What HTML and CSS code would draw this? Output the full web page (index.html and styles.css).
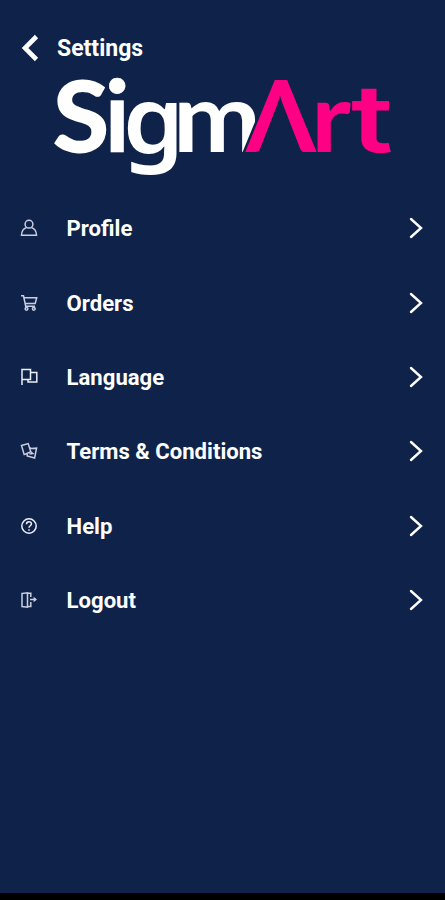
FILE: index.html
```html
<!DOCTYPE html>
<html lang="en">
<head>
    <meta charset="UTF-8">
    <meta name="viewport" content="width=device-width, initial-scale=1.0">
    <title>Settings</title>
    <link rel="stylesheet" href="styles.css">
</head>
<body>
    <div class="screen">
        <header class="header">
            <svg class="back" viewBox="0 0 18 28"><path d="M15.5 2.5 L4 14 L15.5 25.5"/></svg>
            <h1>Settings</h1>
        </header>

        <svg class="logo" viewBox="0 0 445 114">
            <g class="logo-white">
                <text class="logo-s" x="53" y="83.5" textLength="56" lengthAdjust="spacingAndGlyphs">S</text>
                <text class="logo-i" x="104.5" y="84">i</text>
                <text class="logo-g" x="123" y="84.5" textLength="61" lengthAdjust="spacingAndGlyphs">g</text>
                <text class="logo-m" x="173" y="84" textLength="88" lengthAdjust="spacingAndGlyphs">m</text>
            </g>
            <g class="logo-pink">
                <text class="logo-a" x="246" y="84" textLength="70" lengthAdjust="spacingAndGlyphs">Λ</text>
                <text class="logo-r" x="311" y="84" textLength="40" lengthAdjust="spacingAndGlyphs">r</text>
                <text class="logo-t" x="351" y="84" textLength="42" lengthAdjust="spacingAndGlyphs">t</text>
            </g>
        </svg>

        <nav class="menu">
            <a class="item">
                <svg class="icon" viewBox="0 0 18 18"><circle cx="9" cy="5.2" r="3.9"/><path d="M6.5 8.6 C3.5 9.5 1.7 12 1.5 16.2 H16.5 C16.3 12 14.5 9.5 11.5 8.6"/></svg>
                <span>Profile</span>
                <svg class="arrow" viewBox="0 0 14 22"><path d="M2 2 L12 11 L2 20"/></svg>
            </a>
            <a class="item">
                <svg class="icon" viewBox="0 0 18 18"><path d="M1 1.8 H3.5 L5.7 12.2 H15 M4 3.8 H16.7 L15.2 9.5 H5.2"/><circle cx="6.5" cy="14.8" r="1.4"/><circle cx="13.8" cy="14.8" r="1.4"/></svg>
                <span>Orders</span>
                <svg class="arrow" viewBox="0 0 14 22"><path d="M2 2 L12 11 L2 20"/></svg>
            </a>
            <a class="item">
                <svg class="icon bright" viewBox="0 0 18 18"><path d="M2 17 V1.5 H10.5 V11.5 H2 M10.5 4.5 H16.8 V14 H8 V11.5"/></svg>
                <span>Language</span>
                <svg class="arrow" viewBox="0 0 14 22"><path d="M2 2 L12 11 L2 20"/></svg>
            </a>
            <a class="item">
                <svg class="icon" viewBox="0 0 18 18"><path d="M1.5 3.5 L8.2 1.6 L10.8 9.8 L4.2 12.6 Z M9.8 5.6 L11.5 6.6 L16.6 6.2 L14.6 16 L7.2 14 L7.2 12 M11 10 L12.8 11.5 L9.5 12"/></svg>
                <span>Terms &amp; Conditions</span>
                <svg class="arrow" viewBox="0 0 14 22"><path d="M2 2 L12 11 L2 20"/></svg>
            </a>
            <a class="item">
                <svg class="icon bright" viewBox="0 0 18 18"><circle cx="9" cy="9" r="7.2"/><path d="M6.5 7.2 C6.5 3.8 11.6 4 11.4 7 C11.3 8.8 9 8.7 9 10.8 M9 12.2 V13.8"/></svg>
                <span>Help</span>
                <svg class="arrow" viewBox="0 0 14 22"><path d="M2 2 L12 11 L2 20"/></svg>
            </a>
            <a class="item">
                <svg class="icon" viewBox="0 0 18 18"><path d="M2 2.5 L7.5 1.8 V16.2 L2 15.5 Z M7 2.2 H10.8 V6 M10.8 11 V15.5 H7 M10 8.5 H16"/><path class="solid" d="M13.6 5.8 L17 8.5 L13.6 11.2 Z"/></svg>
                <span>Logout</span>
                <svg class="arrow" viewBox="0 0 14 22"><path d="M2 2 L12 11 L2 20"/></svg>
            </a>
        </nav>
    </div>
</body>
</html>
```
FILE: styles.css
```css
* {
    box-sizing: border-box;
}
body {
    margin: 0;
    background-color: #000;
    font-family: Roboto, sans-serif;
    color: #fff;
}
.screen {
    height: 893px;
    padding-top: 28px;
    background-color: #0f234a;
}
.header {
    display: flex;
    align-items: center;
    gap: 18px;
    height: 40px;
    padding-left: 21px;
}
.header h1 {
    margin: 0;
    font-size: 23px;
    font-weight: 700;
}
.back {
    width: 18px;
    height: 28px;
    fill: none;
    stroke: #fff;
    stroke-width: 4.6;
}
.logo {
    display: block;
    width: 445px;
    height: 114px;
    overflow: visible;
    font-family: Lato, sans-serif;
    font-size: 96px;
    font-weight: 700;
}
.logo-white {
    fill: #fff;
}
.logo-pink {
    fill: #ff0084;
}
.logo-s {
    font-size: 98px;
    stroke: #fff;
    stroke-width: 1.8px;
}
.logo-i {
    font-size: 100px;
    stroke: #fff;
    stroke-width: 0.6px;
}
.logo-g {
    font-family: "Noto Sans", sans-serif;
    font-size: 92px;
    font-weight: 600;
}
.logo-a {
    font-size: 100px;
    stroke: #0f234a;
    stroke-width: 5px;
    paint-order: stroke;
}
.logo-t {
    font-family: Inter, sans-serif;
    font-size: 94px;
    font-weight: 600;
}
.menu {
    display: flex;
    flex-direction: column;
    padding: 9px 22px 0 20px;
}
.item {
    display: flex;
    align-items: center;
    height: 74.4px;
    font-size: 22.1px;
    font-weight: 700;
}
.item span {
    flex: 1;
    margin-left: 28.6px;
}
.icon {
    width: 18px;
    height: 18px;
    fill: none;
    stroke: #c9cfe0;
    stroke-width: 1.5;
}
.icon.bright {
    stroke: #eceff7;
}
.icon .solid {
    fill: #c9cfe0;
    stroke: none;
}
.arrow {
    width: 14px;
    height: 22px;
    fill: none;
    stroke: #fff;
    stroke-width: 2.4;
    stroke-linecap: round;
}
```
